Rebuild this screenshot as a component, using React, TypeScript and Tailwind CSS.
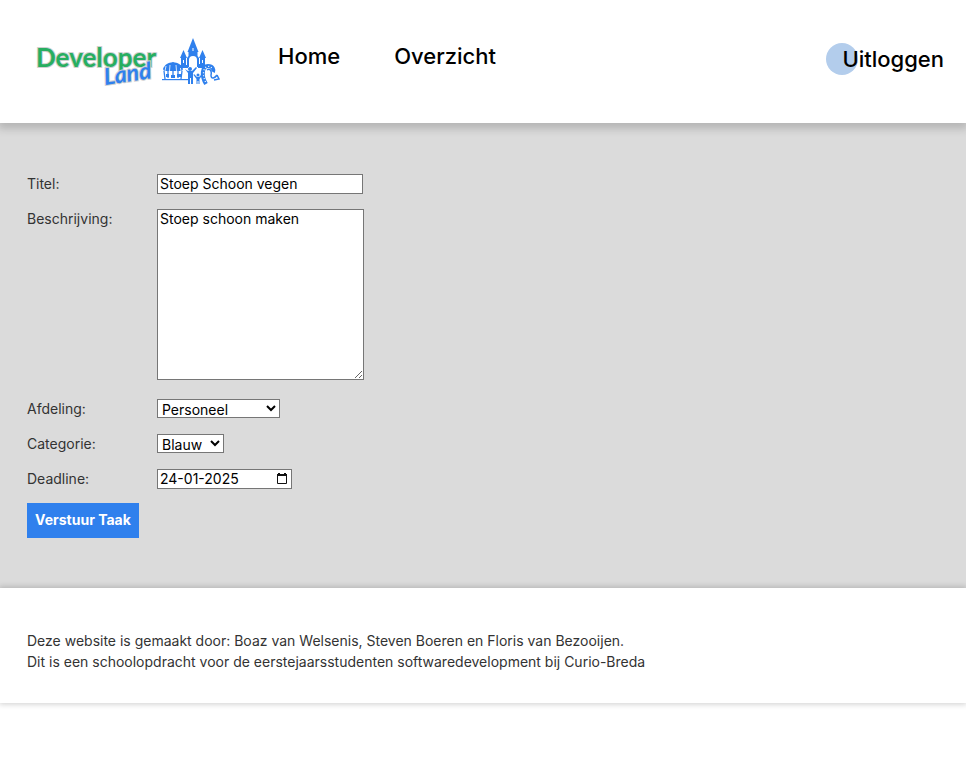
import React from 'react';

const fieldStyle = 'border border-[#767676] bg-white text-black text-sm leading-4';

function Castle() {
  return (
    <svg width="58" height="50" viewBox="0 0 58 50" fill="#2f80ed" aria-hidden="true">
      {/* carousel */}
      <path d="M1 31 C3 26 6 25 11 24 C16 25 19 26 21 31 L20 33 H2 Z" />
      <path d="M4 28 L3 33 M8 27 L7.500 33 M14 27 L14.500 33 M18 28 L19 33" stroke="#fff" strokeWidth="0.8" />
      <path d="M2 33 L3 41 M6 33 V40 M11 33 V40 M16 33 V40 M20 33 L19 41" stroke="#2f80ed" strokeWidth="1.3" />
      <path d="M4 36 h3 v3 h-3 Z M9 37 h4 v3 h-4 Z M15 36 h4 v3 h-4 Z" />
      <path d="M0 41 H27 V42.2 H0 Z" />
      {/* castle */}
      <path d="M31 0 L36.500 14 H25.500 Z" />
      <path d="M26.500 14 H35.500 V18 L37 20 V29 H35 V22 a4 4 0 0 0 -8 0 V29 H25 V20 L26.500 18 Z" />
      <path d="M21.500 12 L25 20 H18 Z M40.500 12 L44 20 H37 Z" />
      <path d="M19 20 h5 v9 h-5 Z M38 20 h5 v9 h-5 Z" />
      <path d="M21 22 h1 v3 h-1 Z M40 22 h1 v3 h-1 Z M30.500 10 h1 v3 h-1 Z" fill="#fff" />
      <path d="M17 27 h9 v3 h-9 Z M36 26 h7 v4 h-7 Z" />
      {/* visitors */}
      <circle cx="28" cy="31" r="2" />
      <path d="M23 31 L26 33 H30 L34 29 L35 30 L31 35 V46 H29 V40 H28 V46 H26 V35 Z" />
      <circle cx="36" cy="37" r="1.500" />
      <path d="M32 36 L35 39 H37 L40 36 L40.500 37 L37.500 41 V46 H36.500 V43 H35.500 V46 H34.500 V41 L31.500 37 Z" />
      {/* roller coaster */}
      <path d="M44 46 C39 38 40 28 46 28 C51 28 52 32 51 34" fill="none" stroke="#2f80ed" strokeWidth="4" />
      <path d="M45 32 C48 30 50 33 49 37 C49 42 53 40 55 37 M55 37 L57 41 L52 42" fill="none" stroke="#2f80ed" strokeWidth="1.500" />
      <path d="M43.500 44 C40 37 41 29 46 28.500 C49 28 50 30 50 32" fill="none" stroke="#fff" strokeWidth="1.200" strokeDasharray="1 2" />
    </svg>
  );
}

function Logo() {
  return (
    <a href="#" className="flex items-center gap-1" aria-label="Developer Land">
      <svg
        width="122"
        height="54"
        viewBox="0 0 122 54"
        className="overflow-visible"
        fontFamily="Lato, sans-serif"
        fontWeight="700"
        stroke="#d0d0d0"
        strokeWidth="2"
        paintOrder="stroke"
      >
        <text x="0" y="31" fontSize="26" fill="#27ae60">Developer</text>
        <text x="69" y="49" fontSize="23" fontStyle="italic" fill="#2f80ed" transform="rotate(-8 69 49)">Land</text>
      </svg>
      <Castle />
    </a>
  );
}

function Row({ id, label, children }: { id: string; label: string; children: React.ReactNode }) {
  return (
    <div className="flex items-start">
      <label htmlFor={id} className="w-[130px] shrink-0 leading-5">{label}</label>
      {children}
    </div>
  );
}

export default function App() {
  return (
    <div className="font-['Inter',sans-serif] text-sm text-[#333333] bg-white min-h-screen overflow-x-hidden">
      <header className="relative bg-white flex items-start justify-between pl-9 pr-[22px] pt-9 pb-[33px] shadow-[0_4px_8px_2px_rgba(0,0,0,0.17)]">
        <div className="flex items-start">
          <Logo />
          <nav className="flex gap-[54px] pl-[58px] pt-1 text-[22px] leading-8 font-medium text-black">
            <a href="#">Home</a>
            <a href="#">Overzicht</a>
          </nav>
        </div>
        <a href="#" className="flex items-center mt-[7px] text-[22px] leading-8 font-medium text-black">
          <span className="size-8 -mr-4 rounded-full bg-[#b3cdec]" />
          <span className="relative">Uitloggen</span>
        </a>
      </header>

      <main className="bg-[#dbdbdb] px-[27px] pt-[51px] pb-[50px]">
        <form className="flex flex-col items-start gap-[15px]">
          <Row id="titel" label="Titel:">
            <input id="titel" type="text" defaultValue="Stoep Schoon vegen" className={`${fieldStyle} w-[206px] h-5 px-0.5 pb-0.5`} />
          </Row>
          <Row id="beschrijving" label="Beschrijving:">
            <textarea id="beschrijving" defaultValue="Stoep schoon maken" className={`${fieldStyle} w-[207px] h-[171px] px-0.5 pt-px mb-1`} />
          </Row>
          <Row id="afdeling" label="Afdeling:">
            <select id="afdeling" className={`${fieldStyle} w-[123px] h-[19px] pb-0.5`}>
              <option>Personeel</option>
            </select>
          </Row>
          <Row id="categorie" label="Categorie:">
            <select id="categorie" className={`${fieldStyle} w-[67px] h-[19px] pb-0.5`}>
              <option>Blauw</option>
            </select>
          </Row>
          <div className="-mb-px">
            <Row id="deadline" label="Deadline:">
              <span className={`${fieldStyle} flex items-center w-[135px] h-5 pl-0.5 pr-[3px]`}>
                <input id="deadline" type="text" defaultValue="24-01-2025" className="min-w-0 flex-1 h-4" />
                <svg width="12" height="13" viewBox="0 0 12 13" className="mb-0.5" aria-hidden="true">
                  <path d="M1.500 2.500 H10.500 V11.500 H1.500 Z" fill="none" stroke="#111" />
                  <path d="M1 2 H11 V4 H1 Z M2 1 H4 V2 H2 Z M8 1 H10 V2 H8 Z" fill="#111" />
                </svg>
              </span>
            </Row>
          </div>
          <button type="submit" className="h-[35px] w-28 pb-0.5 bg-[#2f80ed] text-white text-sm font-bold">
            Verstuur Taak
          </button>
        </form>
      </main>

      <footer className="relative bg-white px-[27px] pt-[42px] pb-[31px] leading-[21px] shadow-[0_0_6px_1px_rgba(0,0,0,0.2)]">
        <p>Deze website is gemaakt door: Boaz van Welsenis, Steven Boeren en Floris van Bezooijen.</p>
        <p>Dit is een schoolopdracht voor de eerstejaarsstudenten softwaredevelopment bij Curio-Breda</p>
      </footer>
    </div>
  );
}
